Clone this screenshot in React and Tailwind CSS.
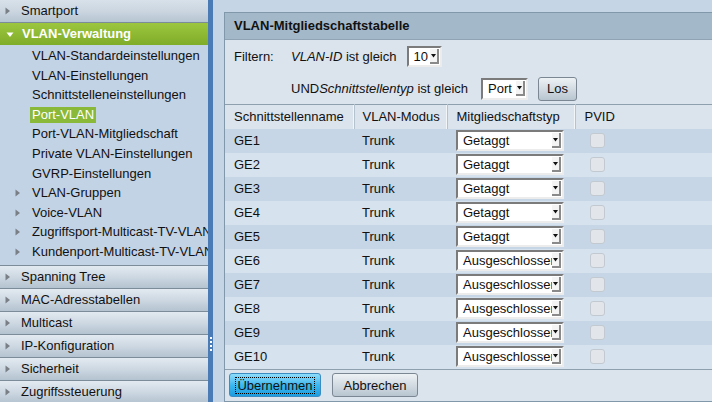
import React from 'react';

const SUB_ITEMS = [
  { label: 'VLAN-Standardeinstellungen' },
  { label: 'VLAN-Einstellungen' },
  { label: 'Schnittstelleneinstellungen' },
  { label: 'Port-VLAN', active: true },
  { label: 'Port-VLAN-Mitgliedschaft' },
  { label: 'Private VLAN-Einstellungen' },
  { label: 'GVRP-Einstellungen' },
  { label: 'VLAN-Gruppen', arrow: true },
  { label: 'Voice-VLAN', arrow: true },
  { label: 'Zugriffsport-Multicast-TV-VLAN', arrow: true },
  { label: 'Kundenport-Multicast-TV-VLAN', arrow: true },
];

const BOTTOM_ITEMS = ['Spanning Tree', 'MAC-Adresstabellen', 'Multicast', 'IP-Konfiguration', 'Sicherheit', 'Zugriffssteuerung'];

const ROWS = Array.from({ length: 10 }, (_, i) => ({
  name: `GE${i + 1}`,
  mode: 'Trunk',
  type: i < 5 ? 'Getaggt' : 'Ausgeschlossen',
}));

function RightArrow({ className = '' }) {
  return (
    <svg width="6" height="8" viewBox="0 0 6 8" className={className}>
      <path d="M0.5 0.5 L5 4 L0.5 7.5 Z" fill="#7a7f86" />
    </svg>
  );
}

function TopItem({ label }) {
  return (
    <div className="h-[23px] flex items-center border-t border-[#7d8c99] bg-gradient-to-b from-[#e3eaf1] via-[#cdd8e2] to-[#b4c3d0] shrink-0">
      <RightArrow className="ml-[5px] mr-[10px]" />
      <span>{label}</span>
    </div>
  );
}

function FakeSelect({ value, width, height = 'h-[21px]' }) {
  return (
    <div className={`${width} ${height} flex items-center bg-white border-2 border-t-[#7b7b7b] border-l-[#7b7b7b] border-r-[#ececec] border-b-[#ececec] overflow-hidden`}>
      <span className="flex-1 pl-[5px] whitespace-nowrap overflow-hidden">{value}</span>
      <div className="w-[9px] h-[15px] mr-[1px] flex items-center justify-center bg-[#f4f4f4] border-r-2 border-b-2 border-[#8a8a8a] shrink-0">
        <svg width="5" height="4" viewBox="0 0 5 4"><path d="M0 0 H5 L2.5 3.5 Z" fill="#111" /></svg>
      </div>
    </div>
  );
}

export default function App() {
  return (
    <div className="w-[712px] h-[402px] overflow-hidden flex text-[13px] text-[#111] bg-[#c6d5e6]" style={{ fontFamily: '"Liberation Sans", Arial, sans-serif' }}>
      {/* sidebar */}
      <div className="w-[208px] shrink-0 flex flex-col bg-[#c3d3e6] overflow-hidden">
        <div className="h-[22px] flex items-center bg-gradient-to-b from-[#d8e1ea] via-[#cbd6e0] to-[#b6c5d2] shrink-0">
          <RightArrow className="ml-[5px] mr-[10px]" />
          <span>Smartport</span>
        </div>
        <div className="h-[23px] flex items-center border-t border-[#7d8c99] bg-gradient-to-b from-[#9cc63e] to-[#7fac29] text-white font-bold shrink-0">
          <svg width="8" height="6" viewBox="0 0 8 6" className="ml-[6px] mr-[8px] mt-[2px]"><path d="M0.5 0.5 H7.5 L4 5 Z" fill="#fff" /></svg>
          <span>VLAN-Verwaltung</span>
        </div>
        <div className="flex flex-col pt-[1px] pb-[3px] whitespace-nowrap">
          {SUB_ITEMS.map((it) => (
            <div key={it.label} className="h-[19.6px] flex items-center">
              <div className="w-[32px] shrink-0 flex justify-end pr-[11px]">{it.arrow && <RightArrow />}</div>
              <span className={it.active ? 'bg-[#8ab838] text-white px-[2px] -ml-[2px] leading-[16px]' : ''}>{it.label}</span>
            </div>
          ))}
        </div>
        {BOTTOM_ITEMS.map((l) => <TopItem key={l} label={l} />)}
      </div>

      {/* splitter */}
      <div className="w-[5px] shrink-0 bg-[#4a7bb4] flex flex-col items-center pt-[337px] gap-[2px]">
        {[0, 1, 2, 3].map((d) => <div key={d} className="w-[2px] h-[2px] bg-white" />)}
      </div>

      {/* content */}
      <div className="flex-1 pl-[11px] pt-[12px] min-w-0">
        <div className="h-[390px] w-[520px] border border-[#8197aa] bg-[#dbe3ec] flex flex-col">
          <div className="h-[27px] shrink-0 bg-[#a3b8c9] border-b border-[#8fa3b4] flex items-center pl-[9px] font-bold">VLAN-Mitgliedschaftstabelle</div>

          <div className="h-[33px] flex items-center pl-[9px] shrink-0">
            <span className="w-[57px]">Filtern:</span>
            <span><i>VLAN-ID</i> ist gleich</span>
            <div className="ml-[10px]"><FakeSelect value="10" width="w-[35px]" /></div>
          </div>
          <div className="h-[31px] flex items-center pl-[66px] shrink-0">
            <span>UND<i>Schnittstellentyp</i> ist gleich</span>
            <div className="ml-[13px]"><FakeSelect value="Port" width="w-[47px]" height="h-[22px]" /></div>
            <button className="ml-[10px] w-[39px] h-[24px] rounded-[3px] border border-[#7b8893] bg-gradient-to-b from-[#eef2f5] to-[#b8c5d0]">Los</button>
          </div>

          <table className="w-full border-collapse shrink-0">
            <thead>
              <tr className="h-[24px] border-t border-[#8e9fae] bg-[#dbe3ec]">
                <th className="w-[129px] font-normal text-left pl-[9px] border-r border-[#b5c3cf] shadow-[inset_-1px_0_0_#f3f6f9]">Schnittstellenname</th>
                <th className="w-[93px] font-normal text-left pl-[8px] border-r border-[#b5c3cf] shadow-[inset_-1px_0_0_#f3f6f9]">VLAN-Modus</th>
                <th className="w-[128px] font-normal text-left pl-[9px] border-r border-[#b5c3cf] shadow-[inset_-1px_0_0_#f3f6f9]">Mitgliedschaftstyp</th>
                <th className="font-normal text-left pl-[9px]">PVID</th>
              </tr>
            </thead>
            <tbody>
              {ROWS.map((r, i) => (
                <tr key={r.name} className={`h-[24px] ${i % 2 === 0 ? 'bg-[#c6d6e6]' : 'bg-[#d6e2ed]'}`}>
                  <td className="pl-[9px]">{r.name}</td>
                  <td className="pl-[8px]">{r.mode}</td>
                  <td className="pl-[9px]"><FakeSelect value={r.type} width="w-[108px]" /></td>
                  <td className="pl-[15px]">
                    <div className="w-[15px] h-[15px] rounded-[3px] bg-[#e2e6ea] border border-[#c2c9d0]" />
                  </td>
                </tr>
              ))}
            </tbody>
          </table>

          <div className="flex-1 flex items-center gap-[11px] pl-[4px] border-t border-[#8e9fae]">
            <button className="w-[92px] h-[24px] rounded-[3px] border border-[#3c8cc2] bg-gradient-to-b from-[#8edcfa] via-[#3ab8ef] to-[#1b9ddf]">
              <span className="outline outline-1 outline-dotted outline-black px-[1px]">Übernehmen</span>
            </button>
            <button className="w-[86px] h-[24px] rounded-[3px] border border-[#7b8893] bg-gradient-to-b from-[#eef2f5] to-[#b8c5d0]">Abbrechen</button>
          </div>
        </div>
      </div>
    </div>
  );
}
